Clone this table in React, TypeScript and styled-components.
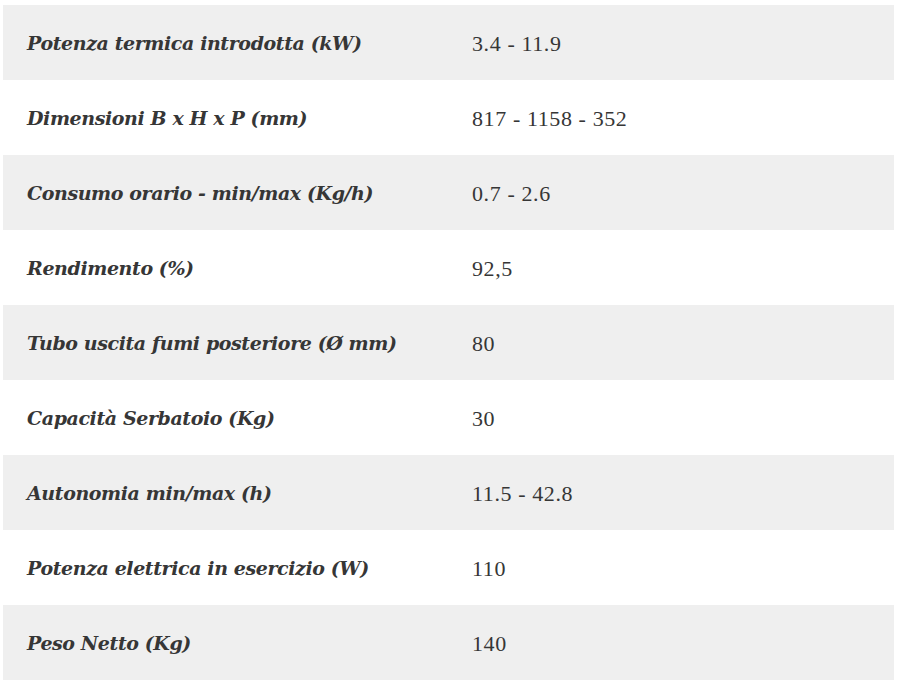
import React from 'react';
import styled, { createGlobalStyle } from 'styled-components';

const specs = [
	{ label: 'Potenza termica introdotta (kW)', value: '3.4 - 11.9' },
	{ label: 'Dimensioni B x H x P (mm)', value: '817 - 1158 - 352' },
	{ label: 'Consumo orario - min/max (Kg/h)', value: '0.7 - 2.6' },
	{ label: 'Rendimento (%)', value: '92,5' },
	{ label: 'Tubo uscita fumi posteriore (Ø mm)', value: '80' },
	{ label: 'Capacità Serbatoio (Kg)', value: '30' },
	{ label: 'Autonomia min/max (h)', value: '11.5 - 42.8' },
	{ label: 'Potenza elettrica in esercizio (W)', value: '110' },
	{ label: 'Peso Netto (Kg)', value: '140' },
];

const GlobalStyle = createGlobalStyle`
	body {
		margin: 0;
		background: #ffffff;
	}
`;

export default () => (
	<>
		<GlobalStyle />
		<Wrapper>
			<SpecTable>
				<tbody>
					{specs.map((s, i) => (
						<Row key={s.label} shaded={i % 2 === 0}>
							<Label>{s.label}</Label>
							<Value>{s.value}</Value>
						</Row>
					))}
				</tbody>
			</SpecTable>
		</Wrapper>
	</>
);

const Wrapper = styled.div`
	padding: 5px 6px 0 3px;
`;

const SpecTable = styled.table`
	width: 100%;
	border-collapse: collapse;
	color: #363636;
`;

const Row = styled.tr<{ shaded: boolean }>`
	height: 75px;
	background: ${props => (props.shaded ? '#efefef' : '#ffffff')};
`;

const Label = styled.td`
	width: 445px;
	padding: 0 0 0 24px;
	font-family: 'DejaVu Serif', serif;
	font-style: italic;
	font-weight: bold;
	font-size: 19px;
	letter-spacing: -0.4px;
	vertical-align: middle;
`;

const Value = styled.td`
	padding: 2px 0 0;
	font-family: 'Liberation Serif', serif;
	font-size: 22px;
	letter-spacing: 0.6px;
	vertical-align: middle;
`;
